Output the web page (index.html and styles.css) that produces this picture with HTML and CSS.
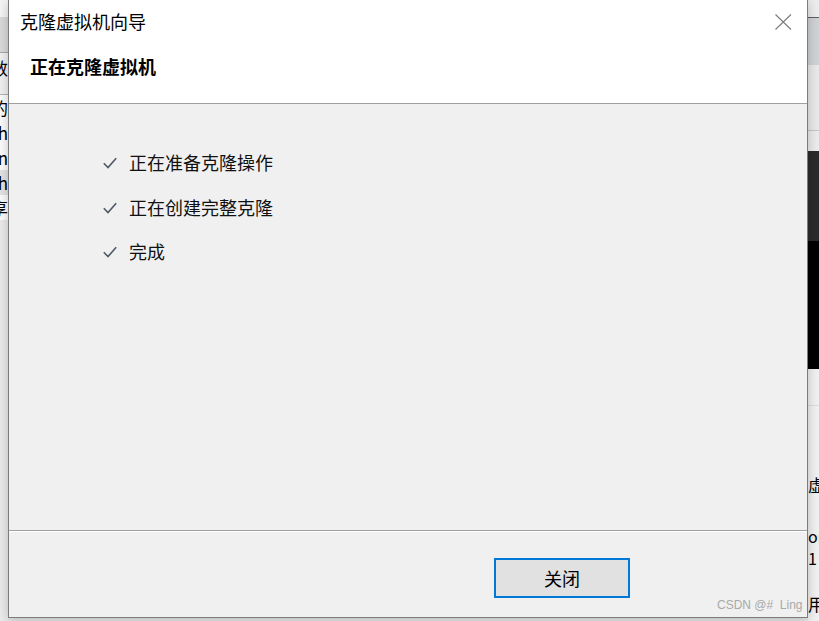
FILE: index.html
```html
<!DOCTYPE html>
<html lang="zh-CN">
<head>
<meta charset="utf-8">
<title>克隆虚拟机向导</title>
<link rel="stylesheet" href="styles.css">
</head>
<body>
<div class="screen">
  <div class="left-strip">
    <div class="ls-a"></div>
    <div class="ls-b"></div>
    <div class="ls-line"></div>
    <div class="ls-row ls-tall"><span>参数</span></div>
    <div class="ls-line2"></div>
    <div class="ls-row"><span>目标的</span></div>
    <div class="ls-row"><span>path</span></div>
    <div class="ls-row"><span>main</span></div>
    <div class="ls-row ls-sel"><span>path</span></div>
    <div class="ls-row"><span>共享</span></div>
    <div class="ls-rest"></div>
  </div>

  <div class="dialog">
    <div class="titlebar">
      <span class="title">克隆虚拟机向导</span>
      <svg class="close" width="17" height="16" viewBox="0 0 17 16" aria-hidden="true">
        <path d="M0.5 0.5 L16 15.5 M16 0.5 L0.5 15.5" stroke="#7b7b7b" stroke-width="1.1" fill="none"/>
      </svg>
    </div>
    <div class="header">
      <h1 class="heading">正在克隆虚拟机</h1>
    </div>
    <div class="content">
      <ul class="steps">
        <li class="step">
          <svg class="check" width="14" height="12" viewBox="0 0 14 12" aria-hidden="true"><polyline points="0.8,6.2 5,10.6 13.2,1.2" fill="none" stroke="#4f5966" stroke-width="1.6"/></svg>
          <span>正在准备克隆操作</span>
        </li>
        <li class="step">
          <svg class="check" width="14" height="12" viewBox="0 0 14 12" aria-hidden="true"><polyline points="0.8,6.2 5,10.6 13.2,1.2" fill="none" stroke="#4f5966" stroke-width="1.6"/></svg>
          <span>正在创建完整克隆</span>
        </li>
        <li class="step">
          <svg class="check" width="14" height="12" viewBox="0 0 14 12" aria-hidden="true"><polyline points="0.8,6.2 5,10.6 13.2,1.2" fill="none" stroke="#4f5966" stroke-width="1.6"/></svg>
          <span>完成</span>
        </li>
      </ul>
    </div>
    <div class="footer">
      <button class="btn" type="button">关闭</button>
    </div>
  </div>

  <div class="right-strip">
    <div class="rs-a"></div>
    <div class="rs-line"></div>
    <div class="rs-b"></div>
    <div class="rs-c"></div>
    <div class="rs-line2"></div>
    <div class="rs-d"></div>
    <div class="rs-e"></div>
    <div class="rs-f"></div>
    <div class="rs-g">
      <div class="rs-space"></div>
      <div class="rs-text rs-t1">虚拟机</div>
      <div class="rs-text rs-t2">on</div>
      <div class="rs-text rs-t3">1</div>
      <div class="rs-text rs-t4">用</div>
    </div>
  </div>

  <div class="watermark">CSDN @#&nbsp; Ling</div>
</div>
</body>
</html>
```

FILE: styles.css
```css
* { box-sizing: border-box; }

html, body {
  margin: 0;
  padding: 0;
  background: #ececec;
}

body {
  font-family: "Noto Sans CJK SC", "Noto Sans", sans-serif;
  color: #000;
}

.screen {
  position: relative;
  width: 819px;
  height: 621px;
  overflow: hidden;
  display: grid;
  grid-template-columns: 8px 800px 11px;
  background: #e9e9e9;
}

/* ---------- left background strip ---------- */
.left-strip {
  display: flex;
  flex-direction: column;
  overflow: hidden;
  font-size: 17px;
}
.ls-a { height: 17px; background: #f4f4f4; }
.ls-b { height: 35px; background: #d9d9d9; }
.ls-line { height: 1px; background: #a8a8a8; }
.ls-line2 { height: 1px; background: #b4b4b4; }
.ls-row {
  height: 25px;
  line-height: 25px;
  display: flex;
  justify-content: flex-end;
  white-space: nowrap;
  overflow: hidden;
  background: #fbfbfb;
}
.ls-row span { flex: none; }
.ls-tall { height: 41px; line-height: 30px; background: #f0f0f0; }
.ls-sel { background: #e3e3e3; }
.ls-rest { flex: 1; background: #ebebeb; }

/* ---------- dialog ---------- */
.dialog {
  position: relative;
  z-index: 1;
  height: 618px;
  display: flex;
  flex-direction: column;
  border: 1px solid #7c7c7c;
  border-top: none;
  background: #f0f0f0;
  box-shadow: 0 2px 10px rgba(0, 0, 0, 0.22);
}

.titlebar {
  height: 42px;
  flex: none;
  display: flex;
  align-items: center;
  padding-left: 11px;
  background: #fff;
}
.title {
  font-size: 18px;
  line-height: 42px;
  color: #000;
}
.close {
  margin-left: auto;
  margin-right: 15px;
  margin-top: 1px;
}

.header {
  flex: none;
  background: #fff;
  padding: 12px 0 25px 21px;
  border-bottom: 1px solid #a0a0a0;
}
.heading {
  margin: 0;
  font-size: 18px;
  line-height: 24px;
  font-weight: 700;
}

.content {
  flex: 1;
  background: #f0f0f0;
}
.steps {
  list-style: none;
  margin: 0;
  padding: 36px 0 0 94px;
}
.step {
  display: flex;
  align-items: center;
  height: 44.5px;
  font-size: 18px;
  color: #111;
}
.check {
  flex: none;
  margin-right: 12px;
  margin-top: 2px;
}

.footer {
  flex: none;
  height: 87px;
  border-top: 1px solid #a0a0a0;
  box-shadow: inset 0 1px 0 #ffffff;
  padding-top: 27px;
  display: flex;
  justify-content: flex-end;
  padding-right: 177px;
  background: #f0f0f0;
}
.btn {
  width: 136px;
  height: 40px;
  border: 2px solid #0078d7;
  background: #e1e1e1;
  font-family: "Noto Sans CJK SC", sans-serif;
  font-size: 18px;
  color: #000;
  padding: 0;
  line-height: 34px;
}

/* ---------- right background strip ---------- */
.right-strip {
  display: flex;
  flex-direction: column;
  overflow: hidden;
  font-size: 17px;
}
.rs-a { height: 17px; background: #ececec; }
.rs-line { height: 1px; background: #5c5c5c; }
.rs-b { height: 47px; background: #cfd1d4; }
.rs-c { height: 65px; background: #e8e8e8; }
.rs-line2 { height: 1px; background: #c4c4c4; }
.rs-d { height: 20px; background: #ebebeb; }
.rs-e { height: 90px; background: #2b2b2b; }
.rs-f { height: 128px; background: #000; }
.rs-g {
  flex: 1;
  background: #f0f0f0;
  display: flex;
  flex-direction: column;
}
.rs-space { height: 37px; border-bottom: 1px solid #dcdcdc; flex: none; }
.rs-text {
  white-space: nowrap;
  overflow: hidden;
  flex: none;
  color: #000;
}
.rs-t1 { margin-top: 67px; line-height: 24px; }
.rs-t2 { margin-top: 28px; line-height: 22px; font-size: 16px; }
.rs-t3 { line-height: 22px; font-size: 16px; }
.rs-t4 { margin-top: 23px; line-height: 24px; }

/* ---------- watermark overlay ---------- */
.watermark {
  position: absolute;
  left: 717px;
  top: 598px;
  z-index: 2;
  font-family: "Liberation Sans", Arial, sans-serif;
  font-size: 12px;
  line-height: 14px;
  color: #a9a9a9;
  white-space: nowrap;
}
```
